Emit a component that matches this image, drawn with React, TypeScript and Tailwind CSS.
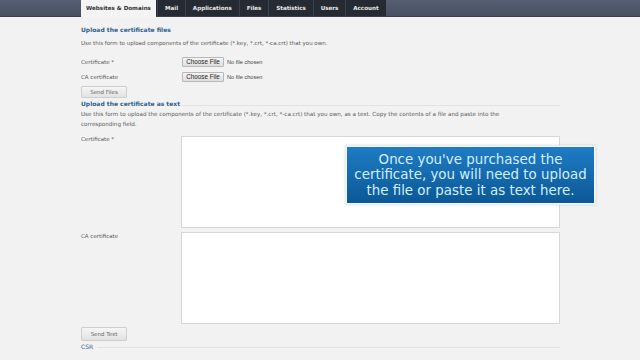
const tabs = ['Mail', 'Applications', 'Files', 'Statistics', 'Users', 'Account'];

function FakeFile() {
  return (
    <div className="flex items-center gap-[3px] pl-[1px]">
      <div className="h-[10px] w-[42px] flex items-center justify-center border border-[#b8b8b8] rounded-[1px] bg-gradient-to-b from-[#f6f6f6] to-[#dedede] text-[6.3px] text-[#222] font-['Liberation_Sans',sans-serif]">
        Choose File
      </div>
      <span className="text-[5.6px] text-[#444] font-['Liberation_Sans',sans-serif]">No file chosen</span>
    </div>
  );
}

function Btn({ label, h }: { label: string; h: string }) {
  return (
    <div className={`${h} w-[46px] flex items-center justify-center border border-[#cfcfcf] rounded-[1px] bg-gradient-to-b from-[#f5f5f5] to-[#e3e3e3] text-[5.5px] text-[#666]`}>
      {label}
    </div>
  );
}

export default function App() {
  return (
    <div className="relative w-[640px] h-[360px] overflow-hidden bg-[#f2f2f2] font-['DejaVu_Sans',sans-serif] text-[#5a5a5a]">
      {/* top navigation */}
      <div className="h-[17px] flex bg-gradient-to-b from-[#566072] to-[#474f60] border-b border-[#3a404c]">
        <div className="w-[81px]" />
        <div className="w-[75px] h-[17px] bg-[#f4f4f4] flex items-center justify-center text-[5.6px] font-bold text-[#333]">
          Websites &amp; Domains
        </div>
        <div className="flex bg-[#262b33] pl-[1px]">
          {tabs.map((t) => (
            <div key={t} className="h-[16px] px-[6.9px] flex items-center text-[5.6px] font-bold text-[#e8e8e8] border-l border-[#3c424c]">
              {t}
            </div>
          ))}
        </div>
      </div>

      {/* content */}
      <div className="pl-[81px] pr-[80px] pt-[8px] flex flex-col">
        <div className="h-[10px] leading-[10px] text-[6px] font-bold text-[#2f5f8f]">Upload the certificate files</div>
        <div className="mt-[3px] h-[10px] leading-[10px] text-[5.5px]">
          Use this form to upload components of the certificate (*.key, *.crt, *-ca.crt) that you own.
        </div>

        <div className="mt-[9px] grid grid-cols-[100px_1fr] items-center h-[10px]">
          <span className="text-[5.5px]">Certificate *</span>
          <FakeFile />
        </div>
        <div className="mt-[5px] grid grid-cols-[100px_1fr] items-center h-[10px]">
          <span className="text-[5.5px]">CA certificate</span>
          <FakeFile />
        </div>
        <div className="mt-[4px]">
          <Btn label="Send Files" h="h-[12px]" />
        </div>

        <div className="mt-[1px] h-[10px] flex items-center gap-[3px]">
          <span className="text-[6px] font-bold text-[#2f5f8f] leading-[10px]">Upload the certificate as text</span>
          <div className="flex-1 h-px bg-[#e2e2e2] mt-[2px]" />
        </div>
        <div className="mt-[1px] text-[5.6px] leading-[9.5px]">
          Use this form to upload the components of the certificate (*.key, *.crt, *-ca.crt) that you own, as a text. Copy the contents of a file and paste into the
          <br />
          corresponding field.
        </div>

        <div className="mt-[7px] grid grid-cols-[100px_379px]">
          <span className="text-[5.5px] leading-[7px]">Certificate *</span>
          <div className="h-[92px] bg-white border border-[#d6d6d6]" />
        </div>
        <div className="mt-[4px] grid grid-cols-[100px_379px]">
          <span className="text-[5.5px] leading-[9px]">CA certificate</span>
          <div className="h-[92px] bg-white border border-[#d6d6d6]" />
        </div>
        <div className="mt-[3px]">
          <Btn label="Send Text" h="h-[14px]" />
        </div>
        <div className="mt-[1px] h-[10px] flex items-center gap-[4px]">
          <span className="text-[6px] text-[#2f5f8f] leading-[10px]">CSR</span>
          <div className="flex-1 h-px bg-[#e2e2e2]" />
        </div>
      </div>

      {/* caption overlay */}
      <div className="absolute left-[345px] top-[145px] w-[251px] h-[60px] border border-[#e6eef6] bg-[#f4f8fb] p-[1px] shadow-[0_0_2px_rgba(0,0,0,0.15)]">
        <div className="w-full h-full bg-gradient-to-b from-[#1f7cc4] to-[#0b5896] flex flex-col items-center justify-center text-[13.4px] leading-[15.5px] text-[#d2efff]">
          <span>Once you've purchased the</span>
          <span>certificate, you will need to upload</span>
          <span>the file or paste it as text here.</span>
        </div>
      </div>
    </div>
  );
}
